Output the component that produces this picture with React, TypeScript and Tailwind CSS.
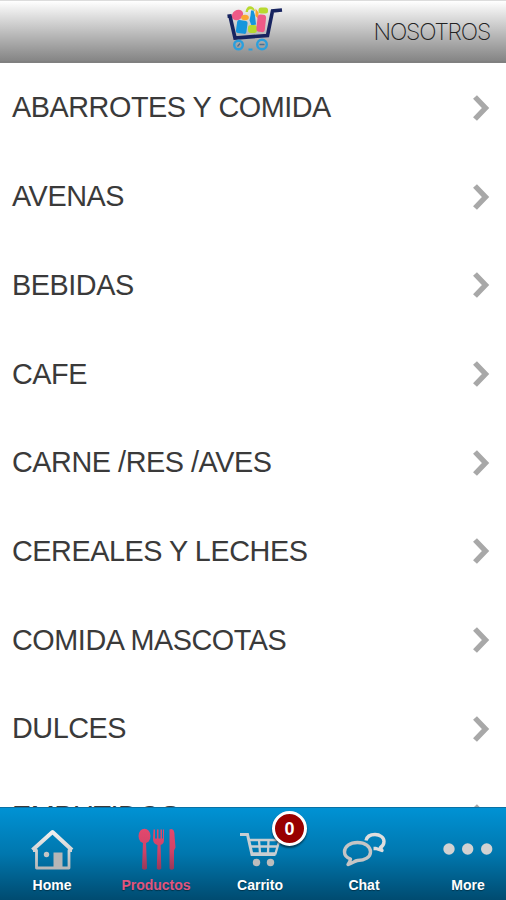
import React from 'react';

const categories = [
  'ABARROTES Y COMIDA',
  'AVENAS',
  'BEBIDAS',
  'CAFE',
  'CARNE /RES /AVES',
  'CEREALES Y LECHES',
  'COMIDA MASCOTAS',
  'DULCES',
  'EMBUTIDOS',
];

const Logo: React.FC = () => (
  <svg width="58" height="50" viewBox="0 0 58 50" fill="none">
    <ellipse cx="12.500" cy="11" rx="6" ry="4.800" transform="rotate(-35 12.500 11)" fill="#ee5a87" />
    <path d="M20.500 8q1-6.500 6-5.500 3 1 3.500 5l-3-2q-4-1-4 2.500z" fill="#b8d92f" />
    <rect x="33.500" y="3.500" width="9.500" height="6" rx="2.500" fill="#b8d92f" />
    <ellipse cx="20" cy="13.500" rx="3.800" ry="2.800" fill="#fba62f" />
    <path d="M30.500 4.500l3 4v6.500l-3-3z" fill="#fba62f" />
    <rect x="11.500" y="16.500" width="10.500" height="13" rx="2" transform="rotate(8 17 23)" fill="#1596dc" />
    <path d="M26 6.500h2.500l1.500 5 1 9-4.500 1-2-5 1-5z" fill="#1596dc" />
    <rect x="23" y="21" width="9" height="8" rx="3" fill="#b8d92f" />
    <rect x="32" y="10.500" width="8.500" height="17.500" rx="3" transform="rotate(6 36 19)" fill="#ee5a87" />
    <path d="M2.500 12.300L5 12L10 34L42.500 31.500L47.500 7L57 6" stroke="#172460" strokeWidth="3.600" />
    <circle cx="13.500" cy="41" r="4.300" stroke="#2a9fdd" strokeWidth="2.400" />
    <circle cx="37" cy="40.500" r="4.800" stroke="#2a9fdd" strokeWidth="2.400" />
    <path d="M12.500 42.500l2.500-3M34.500 40.500h5" stroke="#4a6f90" strokeWidth="1.300" />
    <path d="M23.500 45.500h4" stroke="#2a9fdd" strokeWidth="2" />
  </svg>
);

const Chevron: React.FC = () => (
  <svg width="18" height="28" viewBox="0 0 18 28" fill="none">
    <path d="M3 3L13.500 14L3 25" stroke="#a8a8a8" strokeWidth="5.400" />
  </svg>
);

const HomeIcon: React.FC = () => (
  <svg width="44" height="42" viewBox="0 0 44 42">
    <defs>
      <linearGradient id="silver" x1="0" y1="0" x2="0" y2="42" gradientUnits="userSpaceOnUse">
        <stop stopColor="#f4f4f4" />
        <stop offset="1" stopColor="#b4b4b4" />
      </linearGradient>
    </defs>
    <g stroke="url(#silver)" fill="none" strokeLinejoin="round">
      <path d="M2.500 21L22.500 3L42 21" strokeWidth="4" />
      <path d="M3 21.500H6.500V39H39V21.500H42" strokeWidth="2.800" />
    </g>
    <circle cx="16.500" cy="25.500" r="2.700" fill="#c5c5c5" />
    <path d="M23.500 23.500h9v15h-9z" fill="#b6b6b6" />
  </svg>
);

const CutleryIcon: React.FC = () => (
  <svg width="40" height="44" viewBox="0.5 0.500 40 44">
    <defs>
      <linearGradient id="rose" x1="0" y1="0" x2="0" y2="44" gradientUnits="userSpaceOnUse">
        <stop stopColor="#e4496e" />
        <stop offset=".55" stopColor="#cf4267" />
        <stop offset="1" stopColor="#8f3858" />
      </linearGradient>
    </defs>
    <g fill="url(#rose)">
      <ellipse cx="9" cy="8.500" rx="6" ry="7.300" />
      <path d="M7.500 14h3l1 27q-2.500 2.500-5 0z" />
      <path d="M18 2h1.500v9h2V2H23v9h2V2h1.500v9h1V2h1v10q0 4.500-3.400 5.500l.7 23.500q-2.200 2.500-4.500 0l.7-23.500q-4-1-4.500-5.500z" />
      <path d="M34 2q5-2 5 6l1 12-1.500 3v18q-2.500 2.500-4.500 0z" />
    </g>
  </svg>
);

const CartIcon: React.FC = () => (
  <svg width="42" height="36" viewBox="0 0 42 36" fill="none" stroke="#c8ced2">
    <path d="M1 2.500H8.500L13 22.500H36.500" strokeWidth="3" />
    <path d="M10 8H40.500L36.500 21.500H14M12 14.500H38M20 8L21 21M29.500 8L29 21" strokeWidth="2.300" />
    <circle cx="17.500" cy="30.500" r="3.700" fill="#bcbcbc" stroke="none" />
    <circle cx="31.500" cy="30.500" r="3.700" fill="#bcbcbc" stroke="none" />
  </svg>
);

const ChatIcon: React.FC = () => (
  <svg width="44" height="36" viewBox="0 0 44 36" fill="none" strokeWidth="3.400" strokeLinejoin="round">
    <path d="M24 8.500C25 4 29 2.500 33 2.500C38 2.500 42 5.500 42 9.500C42 12.500 40 14.500 38.500 15.500L40 18.500L34 16.500H31.500" stroke="#dedede" />
    <path d="M8.500 27C4.500 25.500 2.500 23 2.500 20C2.500 14.500 8 10.500 15.500 10.500C23 10.500 28.500 14.500 28.500 20C28.500 25 23 28.500 15.500 28.500C12 29 11 31.500 6 32.500Q8 30 8.500 27Z" stroke="#c5c5c5" />
  </svg>
);

const MoreIcon: React.FC = () => (
  <svg width="50" height="14" viewBox="0 0 50 14" fill="#d2d2d2">
    <circle cx="6" cy="6" r="5.700" />
    <circle cx="24.700" cy="6" r="5.700" />
    <circle cx="43.700" cy="6" r="5.700" />
  </svg>
);

const tabs = [
  { label: 'Home', icon: <HomeIcon /> },
  { label: 'Productos', icon: <CutleryIcon />, active: true },
  { label: 'Carrito', icon: <CartIcon />, badge: 0 },
  { label: 'Chat', icon: <ChatIcon /> },
  { label: 'More', icon: <MoreIcon /> },
];

const App: React.FC = () => {
  return (
    <div className="flex h-[900px] w-[506px] flex-col overflow-hidden bg-white font-['Liberation_Sans',Arial,sans-serif]">
      <header className="grid h-[63px] shrink-0 grid-cols-3 items-center border-t border-b-2 border-t-[#dcdcdc] border-b-[#808080] bg-linear-to-b from-[#ffffff] to-[#858585]">
        <div />
        <div className="flex justify-center pb-1 pl-0.5">
          <Logo />
        </div>
        <button className="pt-0.5 pr-4 text-right font-['Inter',sans-serif] text-[23px] leading-none font-extralight tracking-[-1.2px] text-[#222]">
          NOSOTROS
        </button>
      </header>

      <main className="min-h-0 flex-1 overflow-hidden">
        <ul>
          {categories.map((name) => (
            <li key={name} className="flex h-[88.7px] items-center justify-between pt-px pr-4 pl-3 [&:last-child>span]:pb-0.5">
              <span className="text-[28.8px] leading-none tracking-[-0.45px] text-[#3a3a3a]">{name}</span>
              <Chevron />
            </li>
          ))}
        </ul>
      </main>

      <nav className="flex h-[93px] shrink-0 border-t border-[#0871a5] bg-linear-to-b from-[#0092d4] via-[#0077ae] to-[#004b70]">
        {tabs.map((tab) => (
          <button key={tab.label} className="flex w-[104px] shrink-0 flex-col items-center">
            <span className="relative mt-[18px] flex h-[47px] items-center justify-center">
              {tab.icon}
              {tab.badge !== undefined && (
                <span className="absolute -top-[15px] left-[33px] flex h-[35px] w-[35px] items-center justify-center rounded-full border-[3px] border-white bg-[#980000] pt-0.5 text-[18px] font-bold text-white shadow-[0_2px_2px_rgba(0,0,0,0.5)]">
                  {tab.badge}
                </span>
              )}
            </span>
            <span className={`text-[14px] leading-6 font-bold [text-shadow:0_1px_1px_rgba(0,0,0,0.4)] ${tab.active ? 'text-[#e0557f]' : 'text-white'}`}>
              {tab.label}
            </span>
          </button>
        ))}
      </nav>
    </div>
  );
};

export default App;
